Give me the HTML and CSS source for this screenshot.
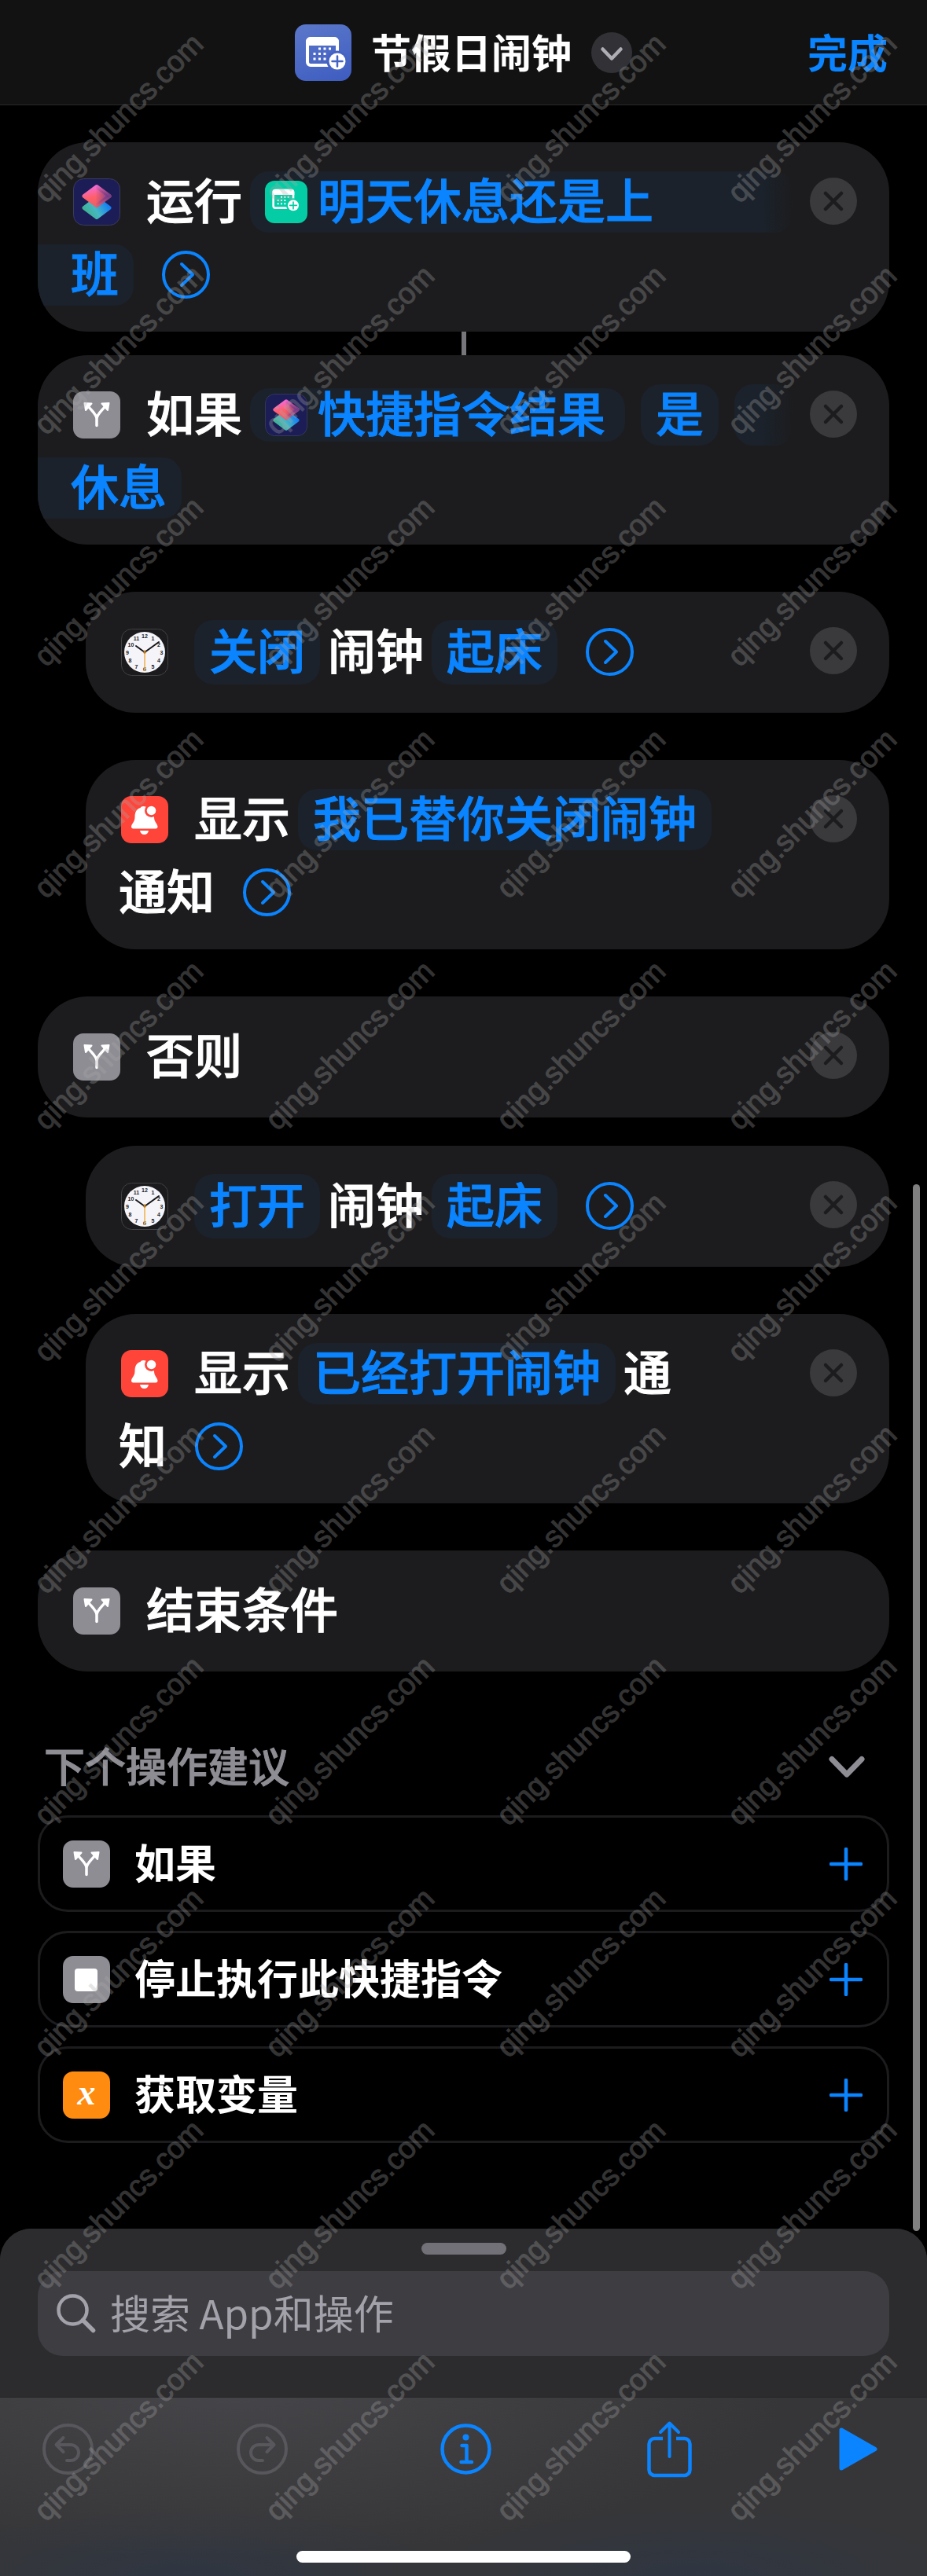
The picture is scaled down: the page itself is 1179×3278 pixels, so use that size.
FILE: index.html
```html
<!DOCTYPE html>
<html lang="zh-CN">
<head>
<meta charset="utf-8">
<meta name="viewport" content="width=device-width, initial-scale=1">
<title>节假日闹钟</title>
<link rel="stylesheet" href="styles.css">
</head>
<body>
<svg class="defs" aria-hidden="true">
  <defs>
    <linearGradient id="g-top" x1="0.3" y1="0" x2="0.6" y2="1"><stop offset="0" stop-color="#f46ad6"/><stop offset="0.55" stop-color="#ff5f66"/><stop offset="1" stop-color="#e8606a"/></linearGradient>
    <linearGradient id="g-shade" x1="0.45" y1="0" x2="1" y2="0"><stop offset="0" stop-color="#7a3f92" stop-opacity="0"/><stop offset="1" stop-color="#6a3a8c" stop-opacity="0.9"/></linearGradient>
    <linearGradient id="g-bottom" x1="0" y1="0.8" x2="1" y2="0.3"><stop offset="0" stop-color="#3fae88"/><stop offset="0.45" stop-color="#45b8c4"/><stop offset="1" stop-color="#0f78f8"/></linearGradient>
    <symbol id="i-shortcuts" viewBox="0 0 60 60">
      <rect x="0.5" y="0.5" width="59" height="59" rx="13" fill="#1c1d57" stroke="#3b3b5c"/>
      <g stroke-linejoin="round" stroke-width="5">
        <path d="M14 37.500 30 25.500 46 37.500 30 49.500Z" fill="url(#g-bottom)" stroke="url(#g-bottom)"/>
        <path d="M14 22.500 30 10.500 46 22.500 30 34.500Z" fill="url(#g-top)" stroke="url(#g-top)"/>
        <path d="M14 22.500 30 10.500 46 22.500 30 34.500Z" fill="url(#g-shade)" stroke="url(#g-shade)"/>
      </g>
    </symbol>
    <symbol id="i-calendar" viewBox="0 0 72 72">
      <rect x="16" y="18" width="38" height="34" rx="4" fill="none" stroke="#fff" stroke-width="4"/>
      <path d="M14 27v-5a6 6 0 0 1 6-6h30a6 6 0 0 1 6 6v5z" fill="#fff"/>
      <path d="M30 29.500h3v3h-3zM36.500 29.500h3v3h-3zM43 29.500h3v3h-3zM23.500 36h3v3h-3zM30 36h3v3h-3zM36.500 36h3v3h-3zM23.500 42.500h3v3h-3zM30 42.500h3v3h-3zM36.500 42.500h3v3h-3z" fill="#fff"/>
      <circle cx="54" cy="47" r="13.500" fill="currentColor"/>
      <circle cx="54" cy="47" r="10.500" fill="#fff"/>
      <path d="M54 40.500v13M47.500 47h13" stroke="currentColor" stroke-width="2.500" stroke-linecap="round"/>
    </symbol>
    <symbol id="i-branch" viewBox="0 0 60 60">
      <rect width="60" height="60" rx="13" fill="#8e8d94"/>
      <path d="M30 43.500V35c0-5-5-9-10-15M30 35c0-5 5-9 10-15" fill="none" stroke="#fff" stroke-width="3.500" stroke-linecap="round"/>
      <path d="M14.500 15l9 .5-7.500 8.500zM45.500 15l-9 .5 7.500 8.500z" fill="#fff" stroke="#fff" stroke-width="2" stroke-linejoin="round"/>
    </symbol>
    <symbol id="i-bell" viewBox="0 0 60 60">
      <rect width="60" height="60" rx="13" fill="#ff453a"/>
      <path d="M28.500 13c2 0 3.500.8 4.500 1.500l9 12c0 7 4.500 9 4.500 12.500 0 1.500-1 2.500-2.500 2.500H15.500c-1.500 0-2.500-1-2.500-2.500 0-3.500 4.500-5.500 4.500-12.500 0-7 3-10.500 7-11.500.5-1.300 2-2 4-2z" fill="#fff"/>
      <circle cx="38.500" cy="18.500" r="8.500" fill="#ff453a"/>
      <circle cx="38.500" cy="18.500" r="5.800" fill="#fff"/>
      <path d="M24 44h11c-.5 3-2.500 5-5.500 5s-5-2-5.500-5z" fill="#fff"/>
    </symbol>
    <symbol id="i-clock" viewBox="0 0 60 60">
      <rect x="0.500" y="0.500" width="59" height="59" rx="13" fill="#1b1b1d" stroke="#424245"/>
      <circle cx="30" cy="30" r="26" fill="#f5f4f9"/>
      <g class="dial" text-anchor="middle">
        <text x="30" y="11.500">12</text><text x="40.500" y="14.500">1</text><text x="48" y="22.500">2</text><text x="51.500" y="32.500">3</text><text x="48" y="43">4</text><text x="40.500" y="51">5</text><text x="30" y="54">6</text><text x="19.500" y="51">7</text><text x="11.500" y="43">8</text><text x="8" y="32.500">9</text><text x="12.500" y="22.500">10</text><text x="19.500" y="14.500">11</text>
      </g>
      <path d="M30 30 19 22M30 30 48 17" stroke="#17171a" stroke-width="2" stroke-linecap="round"/>
      <path d="M30 27v27" stroke="#f0b04a" stroke-width="1.500"/>
      <circle cx="30" cy="30" r="1.800" fill="#b07820"/>
    </symbol>
    <symbol id="i-stop" viewBox="0 0 60 60">
      <rect width="60" height="60" rx="13" fill="#8e8d94"/>
      <rect x="15" y="16" width="29" height="29" rx="4" fill="#fff"/>
    </symbol>
    <symbol id="i-close" viewBox="0 0 60 60">
      <circle cx="30" cy="30" r="30" fill="#3a3a3d"/>
      <path d="M20 20 40 40M40 20 20 40" stroke="#1c1c1e" stroke-width="4.500" stroke-linecap="round"/>
    </symbol>
    <symbol id="i-more" viewBox="0 0 61 61">
      <circle cx="30.500" cy="30.500" r="28.500" fill="none" stroke="#0a84ff" stroke-width="4"/>
      <path d="M25 17 39 30.500 25 44" fill="none" stroke="#0a84ff" stroke-width="4" stroke-linecap="round" stroke-linejoin="round"/>
    </symbol>
    <symbol id="i-plus" viewBox="0 0 42 42">
      <path d="M21 2v38M2 21h38" stroke="#0a84ff" stroke-width="4.500" stroke-linecap="round"/>
    </symbol>
  </defs>
</svg>

<header class="topbar">
  <button class="title" type="button">
    <span class="app-icon"><svg viewBox="0 0 72 72"><use href="#i-calendar"/></svg></span>
    <span class="title-text">节假日闹钟</span>
    <svg class="title-chevron" viewBox="0 0 52 52" aria-hidden="true"><circle cx="26" cy="26" r="26" fill="#323136"/><path d="M14.500 21.500 26 33.500 37.500 21.500" fill="none" stroke="#aeadb4" stroke-width="4.500" stroke-linecap="round" stroke-linejoin="round"/></svg>
  </button>
  <button class="done" type="button">完成</button>
</header>

<main class="editor">
  <section class="actions">
    <article class="card">
      <div class="line">
        <svg class="icon"><use href="#i-shortcuts"/></svg>
        <span class="word">运行</span>
        <button class="pill pill-start" type="button"><span class="pill-app"><svg viewBox="0 0 54 54"><use href="#i-calendar" width="48" height="48"/></svg></span>明天休息还是上</button>
      </div>
      <div class="line">
        <button class="pill pill-end" type="button">班</button>
        <button class="more" type="button" aria-label="更多"><svg><use href="#i-more"/></svg></button>
      </div>
      <button class="close" type="button" aria-label="移除"><svg><use href="#i-close"/></svg></button>
    </article>
    <div class="connector"></div>
    <article class="card">
      <div class="line">
        <svg class="icon"><use href="#i-branch"/></svg>
        <span class="word">如果</span>
        <button class="pill pill-var" type="button"><svg class="pill-app"><use href="#i-shortcuts"/></svg>快捷指令结果</button>
        <button class="pill pill-next" type="button">是</button>
        <span class="pill pill-start pill-next"></span>
      </div>
      <div class="line">
        <button class="pill pill-end" type="button">休息</button>
      </div>
      <button class="close" type="button" aria-label="移除"><svg><use href="#i-close"/></svg></button>
    </article>
    <article class="card nested gap-l">
      <div class="line">
        <svg class="icon"><use href="#i-clock"/></svg>
        <button class="pill pill-tall" type="button">关闭</button>
        <span class="word">闹钟</span>
        <button class="pill pill-tall" type="button">起床</button>
        <button class="more" type="button" aria-label="更多"><svg><use href="#i-more"/></svg></button>
      </div>
      <button class="close" type="button" aria-label="移除"><svg><use href="#i-close"/></svg></button>
    </article>
    <article class="card nested gap-l">
      <div class="line">
        <svg class="icon"><use href="#i-bell"/></svg>
        <span class="word">显示</span>
        <button class="pill" type="button">我已替你关闭闹钟</button>
      </div>
      <div class="line">
        <span class="word">通知</span>
        <button class="more" type="button" aria-label="更多"><svg><use href="#i-more"/></svg></button>
      </div>
      <button class="close" type="button" aria-label="移除"><svg><use href="#i-close"/></svg></button>
    </article>
    <article class="card gap-l">
      <div class="line">
        <svg class="icon"><use href="#i-branch"/></svg>
        <span class="word">否则</span>
      </div>
      <button class="close" type="button" aria-label="移除"><svg><use href="#i-close"/></svg></button>
    </article>
    <article class="card nested gap-s">
      <div class="line">
        <svg class="icon"><use href="#i-clock"/></svg>
        <button class="pill pill-tall" type="button">打开</button>
        <span class="word">闹钟</span>
        <button class="pill pill-tall" type="button">起床</button>
        <button class="more" type="button" aria-label="更多"><svg><use href="#i-more"/></svg></button>
      </div>
      <button class="close" type="button" aria-label="移除"><svg><use href="#i-close"/></svg></button>
    </article>
    <article class="card nested gap-l">
      <div class="line">
        <svg class="icon"><use href="#i-bell"/></svg>
        <span class="word">显示</span>
        <button class="pill" type="button">已经打开闹钟</button>
        <span class="word">通</span>
      </div>
      <div class="line">
        <span class="word">知</span>
        <button class="more" type="button" aria-label="更多"><svg><use href="#i-more"/></svg></button>
      </div>
      <button class="close" type="button" aria-label="移除"><svg><use href="#i-close"/></svg></button>
    </article>
    <article class="card gap-l">
      <div class="line">
        <svg class="icon"><use href="#i-branch"/></svg>
        <span class="word">结束条件</span>
      </div>
    </article>
  </section>

  <section class="suggestions">
    <div class="suggest-head">
      <h2>下个操作建议</h2>
      <button class="collapse" type="button" aria-label="折叠"><svg viewBox="0 0 46 30"><path d="M4 4.500 23 24 42 4.500" fill="none" stroke="#8e8d94" stroke-width="7" stroke-linecap="round" stroke-linejoin="round"/></svg></button>
    </div>
    <button class="suggest" type="button"><svg class="icon"><use href="#i-branch"/></svg><span class="suggest-name">如果</span><svg class="plus"><use href="#i-plus"/></svg></button>
    <button class="suggest" type="button"><svg class="icon"><use href="#i-stop"/></svg><span class="suggest-name">停止执行此快捷指令</span><svg class="plus"><use href="#i-plus"/></svg></button>
    <button class="suggest" type="button"><span class="icon var-icon">x</span><span class="suggest-name">获取变量</span><svg class="plus"><use href="#i-plus"/></svg></button>
  </section>
  <div class="scrollbar"></div>
</main>

<footer class="sheet">
  <div class="sheet-top">
    <div class="grabber"></div>
    <label class="search">
      <svg viewBox="0 0 50 50" aria-hidden="true"><circle cx="20.500" cy="20.500" r="18" fill="none" stroke="#a3a2aa" stroke-width="4.500"/><path d="M33.500 33.500 46.500 46.500" stroke="#a3a2aa" stroke-width="5.500" stroke-linecap="round"/></svg>
      <input type="text" placeholder="搜索 App和操作" aria-label="搜索 App和操作">
    </label>
  </div>
  <nav class="toolbar">
    <button type="button" aria-label="撤销" disabled><svg width="65" height="65" viewBox="0 0 65 65" fill="none" stroke="#58575b" stroke-width="4" stroke-linecap="round" stroke-linejoin="round"><circle cx="32.500" cy="32.500" r="30.500"/><path d="M26.500 18 17.500 27l9 9M18 27h18a10 10 0 0 1 0 20h-5"/></svg></button>
    <button type="button" aria-label="重做" disabled><svg width="65" height="65" viewBox="0 0 65 65" fill="none" stroke="#58575b" stroke-width="4" stroke-linecap="round" stroke-linejoin="round"><circle cx="32.500" cy="32.500" r="30.500"/><path d="M38.500 18 47.500 27l-9 9M47 27H28a10 10 0 0 0 0 20h5"/></svg></button>
    <button type="button" aria-label="信息"><svg width="65" height="65" viewBox="0 0 65 65" fill="none" stroke="#0a84ff" stroke-width="4.500" stroke-linecap="round" stroke-linejoin="round"><circle cx="32.500" cy="32.500" r="30"/><path d="M27.500 28h6v21M26.500 49h13.500"/><circle cx="32.500" cy="17.500" r="4" fill="#0a84ff" stroke="none"/></svg></button>
    <button type="button" aria-label="共享"><svg width="57" height="73" viewBox="0 0 57 73" fill="none" stroke="#0a84ff" stroke-width="4.500" stroke-linecap="butt" stroke-linejoin="round"><path d="M20 23H9.500a7 7 0 0 0-7 7v33a7 7 0 0 0 7 7h38a7 7 0 0 0 7-7V30a7 7 0 0 0-7-7H37"/><path d="M28.500 46V4M17 15 28.500 3.500 40 15" stroke-linecap="round" stroke-width="4"/></svg></button>
    <button type="button" aria-label="运行"><svg width="49" height="55" viewBox="0 0 49 55"><path d="M3 3 46 27.500 3 52Z" fill="#0a84ff" stroke="#0a84ff" stroke-width="5" stroke-linejoin="round"/></svg></button>
  </nav>
  <div class="home"></div>
</footer>

<div class="watermark" aria-hidden="true">
  <span>qing.shuncs.com</span><span>qing.shuncs.com</span><span>qing.shuncs.com</span><span>qing.shuncs.com</span>
  <span>qing.shuncs.com</span><span>qing.shuncs.com</span><span>qing.shuncs.com</span><span>qing.shuncs.com</span>
  <span>qing.shuncs.com</span><span>qing.shuncs.com</span><span>qing.shuncs.com</span><span>qing.shuncs.com</span>
  <span>qing.shuncs.com</span><span>qing.shuncs.com</span><span>qing.shuncs.com</span><span>qing.shuncs.com</span>
  <span>qing.shuncs.com</span><span>qing.shuncs.com</span><span>qing.shuncs.com</span><span>qing.shuncs.com</span>
  <span>qing.shuncs.com</span><span>qing.shuncs.com</span><span>qing.shuncs.com</span><span>qing.shuncs.com</span>
  <span>qing.shuncs.com</span><span>qing.shuncs.com</span><span>qing.shuncs.com</span><span>qing.shuncs.com</span>
  <span>qing.shuncs.com</span><span>qing.shuncs.com</span><span>qing.shuncs.com</span><span>qing.shuncs.com</span>
  <span>qing.shuncs.com</span><span>qing.shuncs.com</span><span>qing.shuncs.com</span><span>qing.shuncs.com</span>
  <span>qing.shuncs.com</span><span>qing.shuncs.com</span><span>qing.shuncs.com</span><span>qing.shuncs.com</span>
  <span>qing.shuncs.com</span><span>qing.shuncs.com</span><span>qing.shuncs.com</span><span>qing.shuncs.com</span>
</div>
</body>
</html>
```

FILE: styles.css
```css
:root {
  --blue: #0a84ff;
  --card: #1c1c1e;
  --pill: #1b222b;
  --grey: #8e8d94;
}

* {
  box-sizing: border-box;
}

body {
  margin: 0;
  min-height: 100vh;
  position: relative;
  display: flex;
  flex-direction: column;
  background: #000;
  color: #fff;
  font-family: "Noto Sans CJK SC", sans-serif;
  font-weight: 500;
}

button {
  margin: 0;
  padding: 0;
  border: 0;
  background: none;
  color: inherit;
  font: inherit;
}

svg {
  display: block;
  flex: none;
}

.defs {
  position: absolute;
  width: 0;
  height: 0;
}

/* Header */
.topbar {
  display: grid;
  grid-template-columns: 1fr auto 1fr;
  align-items: center;
  height: 134px;
  padding: 0 50px;
  background: #121212;
  border-bottom: 1px solid #2a2a2a;
  font-size: 51px;
  line-height: 72px;
}

.title {
  grid-column: 2;
  display: flex;
  align-items: center;
}

.title-text {
  margin: 0 25px;
  padding-bottom: 4px;
  font-weight: 700;
}

.app-icon {
  width: 72px;
  height: 72px;
  border-radius: 14px;
  background: linear-gradient(160deg, #5c78cb, #3d5cbf);
  color: #4563c3;
}

.title-chevron {
  width: 52px;
  height: 52px;
}

.done {
  justify-self: end;
  padding-bottom: 4px;
  color: var(--blue);
  font-weight: 700;
}

/* Action list */
.editor {
  flex: 1;
  position: relative;
  padding: 47px 48px 109px;
}

.actions {
  display: flex;
  flex-direction: column;
}

.card {
  position: relative;
  overflow: hidden;
  padding: 29px 122px 26px 45px;
  border-radius: 64px;
  background: var(--card);
  font-size: 61px;
  -webkit-text-stroke: 1px currentColor;
}

.card:not(:has(.line + .line)) {
  padding-top: 30px;
  padding-bottom: 31px;
}

.nested {
  margin-left: 61px;
}

.gap-l {
  margin-top: 60px;
}

.gap-s {
  margin-top: 36px;
}

.connector {
  align-self: center;
  width: 6px;
  height: 30px;
  background: #77767c;
}

.line {
  display: flex;
  align-items: center;
  height: 93px;
  line-height: 72px;
  white-space: nowrap;
}

.line + .line {
  margin-left: -3px;
}

.icon {
  width: 60px;
  height: 60px;
  flex: none;
}

.line .icon {
  margin-right: 33px;
}

.word {
  padding-bottom: 8px;
}

.pill {
  display: flex;
  align-items: center;
  height: 78px;
  padding: 0 19px 8px;
  border-radius: 24px;
  background: var(--pill);
  color: var(--blue);
}

.word + .pill,
.pill + .word {
  margin-left: 10px;
}

.pill-tall {
  height: 82px;
}

.pill-next {
  margin-left: 20px;
}

.pill-var {
  height: 68px;
  padding-right: 25px;
}

.pill-start {
  flex: 1;
  background: linear-gradient(to right, var(--pill), var(--pill) calc(100% - 40px), transparent);
}

.pill-end {
  margin-left: -45px;
  padding-left: 45px;
  border-radius: 0 24px 24px 0;
}

.pill-app {
  width: 54px;
  height: 54px;
  margin: 8px 13px 0 0;
  border-radius: 12px;
}

span.pill-app {
  background: #04cda5;
  color: #04cda5;
}

.more {
  margin-left: 36px;
}

.more svg {
  width: 61px;
  height: 61px;
}

.close {
  position: absolute;
  top: 45px;
  right: 41px;
}

.close svg {
  width: 60px;
  height: 60px;
}

.dial {
  font: 700 7px "Liberation Sans", Arial, sans-serif;
  fill: #1b1b1d;
  -webkit-text-stroke: 0;
}

/* Suggestions */
.suggestions {
  display: flex;
  flex-direction: column;
  gap: 24px;
  padding-top: 85px;
  font-size: 52px;
}

.suggest-head {
  display: flex;
  align-items: center;
  justify-content: space-between;
  height: 74px;
  padding: 0 31px 0 8px;
}

.suggest-head h2 {
  margin: 0;
  padding-bottom: 8px;
  color: var(--grey);
  font-size: inherit;
  font-weight: 500;
  -webkit-text-stroke: 1px currentColor;
}

.collapse svg {
  width: 46px;
  height: 30px;
}

.suggest {
  display: flex;
  align-items: center;
  gap: 31px;
  height: 123px;
  padding: 0 31px 0 29px;
  border: 3px solid #1c1c1e;
  border-radius: 38px;
  line-height: 72px;
  text-align: left;
}

.suggest-name {
  flex: 1;
  padding-bottom: 6px;
  font-weight: 700;
}

.plus {
  width: 42px;
  height: 42px;
}

.var-icon {
  padding-bottom: 6px;
  border-radius: 13px;
  background: #ff8c10;
  font: italic 700 46px/54px "Liberation Serif", serif;
  text-align: center;
}

.scrollbar {
  position: absolute;
  z-index: 1;
  right: 9px;
  bottom: -3px;
  width: 9px;
  height: calc(49% + 8px);
  border-radius: 5px;
  background: #808080;
}

/* Bottom sheet */
.sheet {
  border-radius: 40px 40px 0 0;
  overflow: hidden;
  background:
    radial-gradient(ellipse 60% 50% at 25% 45%, #464549, transparent),
    radial-gradient(ellipse 30% 20% at 20% 100%, #2f3642, transparent),
    radial-gradient(ellipse 30% 20% at 75% 100%, #2f3642, transparent),
    #363638;
}

.sheet-top {
  display: flex;
  flex-direction: column;
  gap: 21px;
  padding: 18px 48px 52px;
  border-bottom: 1px solid #252527;
  background: #2c2c2e;
}

.grabber {
  align-self: center;
  width: 108px;
  height: 15px;
  border-radius: 8px;
  background: #727177;
}

.search {
  display: flex;
  align-items: center;
  gap: 18px;
  height: 108px;
  padding: 0 24px;
  border-radius: 32px;
  background: #3e3d42;
}

.search svg {
  width: 50px;
  height: 50px;
}

.search input {
  flex: 1;
  min-width: 0;
  padding: 0 0 4px;
  border: 0;
  outline: 0;
  background: none;
  color: #fff;
  font: 400 51px/72px "Noto Sans CJK SC", sans-serif;
}

.search input::placeholder {
  color: #a3a2aa;
  opacity: 1;
}

.toolbar {
  display: grid;
  grid-template-columns: 247fr 259fr 263fr 244fr 49px;
  align-items: center;
  justify-items: start;
  height: 130px;
  padding: 0 63px 0 54px;
}

.home {
  width: 36%;
  height: 15px;
  margin: 65px auto 17px;
  border-radius: 8px;
  background: #fff;
}

/* Diagonal site mark tiled over the whole page */
.watermark {
  position: absolute;
  inset: 0;
  z-index: 2;
  display: grid;
  grid-template-columns: repeat(4, 1fr);
  grid-auto-rows: 295px;
  place-items: center;
  align-content: start;
  padding: 2px 0 0 4px;
  overflow: hidden;
  pointer-events: none;
  color: #aaa;
  opacity: 0.3;
  font: 400 38px/40px "Liberation Sans", Arial, sans-serif;
  -webkit-text-stroke: 1px currentColor;
}

.watermark span {
  transform: rotate(-45deg);
}
```
